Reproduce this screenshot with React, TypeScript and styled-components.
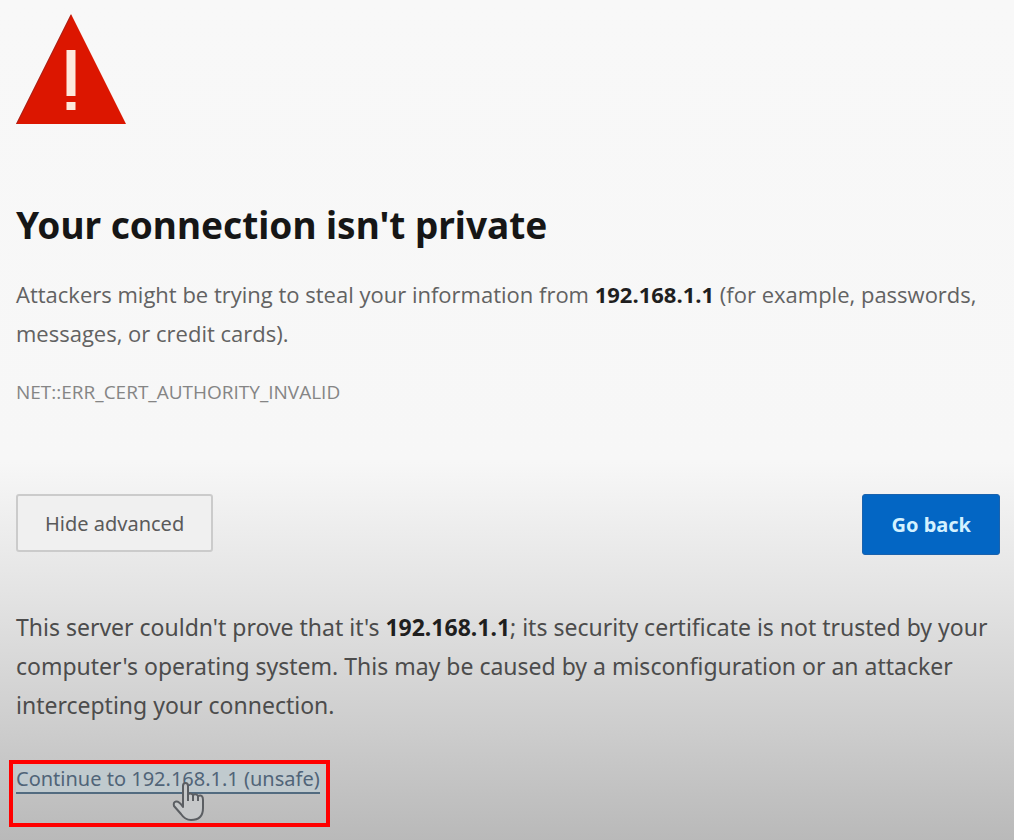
import React from "react";
import styled, { createGlobalStyle } from "styled-components";

const GlobalStyle = createGlobalStyle`
  * { box-sizing: border-box; }
  html { min-height: 100%; background: #f7f7f7; }
  body { margin: 0; font-family: "Noto Sans", "Open Sans", sans-serif; }
`;

const Page = styled.main`
  min-height: 100vh;
  padding: 14px 14px 13px 16px;
  background: linear-gradient(to bottom, #f8f8f8 0%, #f7f7f7 55%, #e3e3e3 71%, #cecece 86%, #b9b9b9 100%);
`;

const WarningIcon = styled.svg`
  display: block;
  width: 110px;
  height: 111px;
`;

const Title = styled.h1`
  margin: 76px 0 0;
  font-size: 37px;
  line-height: 48px;
  font-weight: 700;
  color: #161616;
`;

const Summary = styled.p`
  margin: 26px 0 0;
  font-family: "Open Sans", "Noto Sans", sans-serif;
  font-size: 22px;
  line-height: 39px;
  color: #626262;
`;

const Details = styled.p`
  margin: 53px 0 0;
  font-size: 23px;
  line-height: 39px;
  color: #4c4c4c;
`;

const Host = styled.strong`
  font-weight: 700;
  color: #1f1f1f;
`;

const ErrorCode = styled.p`
  margin: 21px 0 0;
  font-family: "Open Sans", "Noto Sans", sans-serif;
  font-size: 19px;
  line-height: 36px;
  color: #858585;
`;

const Actions = styled.div`
  display: flex;
  justify-content: space-between;
  align-items: flex-start;
  margin-top: 84px;
`;

const Button = styled.button<{ $primary?: boolean }>`
  height: ${(p) => (p.$primary ? 61 : 58)}px;
  padding: 0 ${(p) => (p.$primary ? 28 : 27)}px;
  border: ${(p) => (p.$primary ? "1px solid #1a62ad" : "2px solid #cbcbcb")};
  border-radius: 3px;
  background: ${(p) => (p.$primary ? "#0366c4" : "#f0f0f0")};
  color: ${(p) => (p.$primary ? "#d3f1ff" : "#5a5a5a")};
  font-family: inherit;
  font-size: 20px;
  font-weight: ${(p) => (p.$primary ? 700 : 400)};
`;

const Highlight = styled.div`
  position: relative;
  width: fit-content;
  height: 67px;
  margin: 35px 0 0 -7px;
  padding: 2px 6px 2px 3px;
  border: 4px solid #ff0000;
`;

const ProceedLink = styled.a`
  display: block;
  height: 28px;
  border-bottom: 2px solid #526b80;
  background: #c0cace;
  color: #506478;
  font-size: 20px;
  line-height: 26px;
  text-decoration: none;
`;

const Pointer = styled.svg`
  position: absolute;
  left: 158px;
  top: 16px;
  width: 36px;
  height: 42px;
`;

export default function App() {
  return (
    <>
      <GlobalStyle />
      <Page>
        <WarningIcon viewBox="0 0 110 111" role="img" aria-label="Warning">
          <path d="M55 0 L110 110 H0 Z" fill="#dc1600" />
          <path d="M55 1 L0.5 110" stroke="#7d2a2a" strokeWidth="1" opacity="0.6" />
          <rect x="50.5" y="36" width="9" height="46" fill="#fde9dc" />
          <rect x="50.5" y="88" width="9" height="8" fill="#fde9dc" />
        </WarningIcon>
        <Title>Your connection isn't private</Title>
        <Summary>
          Attackers might be trying to steal your information from <Host>192.168.1.1</Host> (for
          example, passwords, messages, or credit cards).
        </Summary>
        <ErrorCode>NET::ERR_CERT_AUTHORITY_INVALID</ErrorCode>
        <Actions>
          <Button type="button">Hide advanced</Button>
          <Button type="button" $primary>
            Go back
          </Button>
        </Actions>
        <Details>
          This server couldn't prove that it's <Host>192.168.1.1</Host>; its security certificate is
          not trusted by your computer's operating system. This may be caused by a misconfiguration
          or an attacker intercepting your connection.
        </Details>
        <Highlight>
          <ProceedLink href="#proceed">Continue to 192.168.1.1 (unsafe)</ProceedLink>
          <Pointer viewBox="0 0 36 42" aria-hidden="true">
            <path
              d="M12 27 V6 Q12 3 14.500 3 Q17 3 17 6 V14 Q20 12.500 22 15 Q25 13 27 16 Q32 14 32 20 V28 Q32 40 20 40 Q14 40 10 34 L3 26 Q2 22 5 21.500 Q8 21 12 27 Z"
              fill="#c6c8c9"
              stroke="#5b5e62"
              strokeWidth="2"
              strokeLinejoin="round"
            />
            <path d="M17 13 V21 M22 14 V21 M27 15 V21" stroke="#5b5e62" strokeWidth="2" fill="none" />
          </Pointer>
        </Highlight>
      </Page>
    </>
  );
}
